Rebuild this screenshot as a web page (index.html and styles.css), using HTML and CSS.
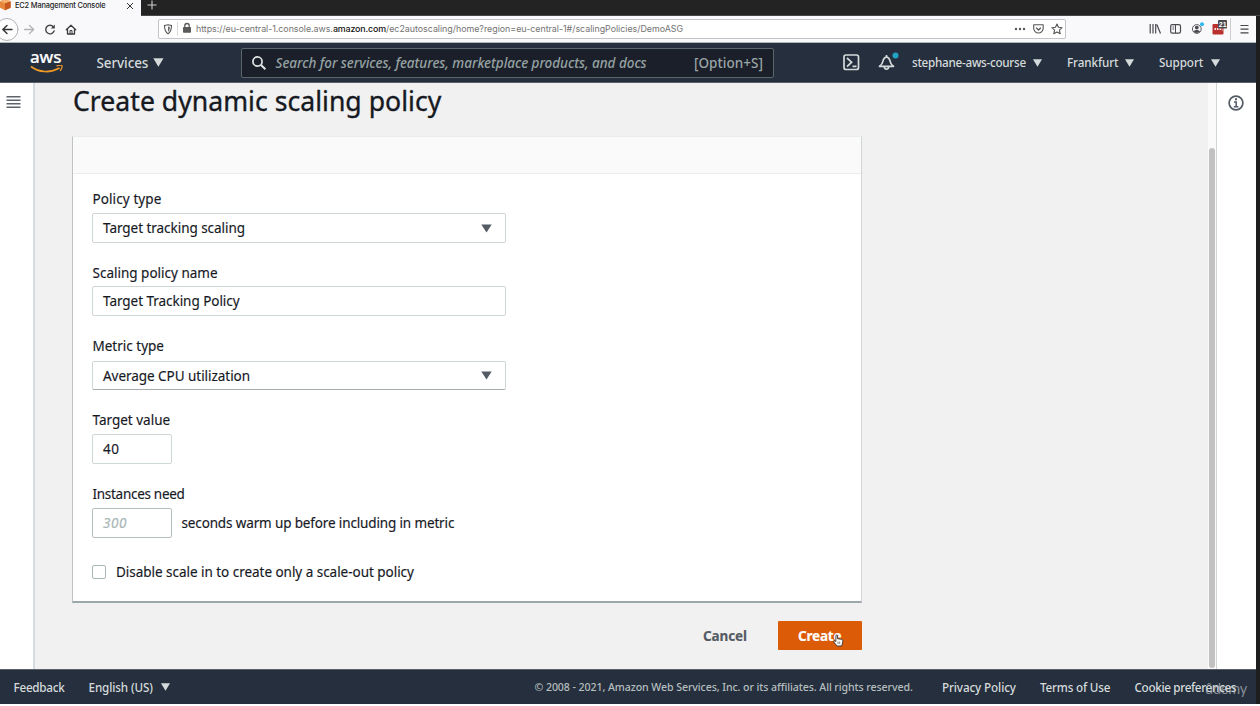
FILE: index.html
```html
<!DOCTYPE html>
<html lang="en">
<head>
<meta charset="utf-8">
<title>EC2 Management Console</title>
<link rel="stylesheet" href="styles.css">
</head>
<body>
<div class="screen">
<div class="window">
  <div class="tabstrip">
    <div class="tab">
      <svg class="tab-icon" width="11" height="12" viewBox="0 0 11 12"><path d="M0 2.200 5 0l5.600 2.200v6.600L5 11.200 0 8.800z" fill="#e8873c"/><path d="M5 4.200l5.600-2v6.600L5 11.200z" fill="#c9581e"/><path d="M0 2.200 5 0l5.600 2.200L5 4.200z" fill="#f5b06e"/></svg>
      <span class="tab-title">EC2 Management Console</span>
      <svg class="tab-close" width="8" height="8" viewBox="0 0 8 8"><path d="M1 1l6 6M7 1l-6 6" stroke="#333" stroke-width="1"/></svg>
    </div>
    <svg class="tab-new" width="10" height="10" viewBox="0 0 10 10"><path d="M5 .5v9M.5 5h9" stroke="#d0d0d0" stroke-width="1.100"/></svg>
  </div>

  <div class="toolbar">
    <svg class="nav-buttons" width="80" height="25" viewBox="0 0 80 25" fill="none" stroke-linecap="round" stroke-linejoin="round">
      <circle cx="7" cy="12.500" r="11" fill="#fdfdfe" stroke="#b4b4b8"/>
      <path d="M12 12.500H2.800M7 8.500l-4.200 4 4.200 4" stroke="#333" stroke-width="1.400"/>
      <path d="M24.500 12.500h9M29.500 8.500l4.200 4-4.200 4" stroke="#b3b3b6" stroke-width="1.300"/>
      <path d="M53.300 9.700a4.300 4.300 0 1 0 .8 4.300" stroke="#444" stroke-width="1.400"/>
      <path d="M54.800 7.500v4h-4z" fill="#444"/>
      <path d="M66.300 12.800 71 8.200l4.700 4.600M67.500 12.500V17h7v-4.500" stroke="#3c3c3c" stroke-width="1.300"/><path d="M70 17v-3.500h2V17" stroke="#3c3c3c"/>
    </svg>
    <div class="urlbar">
      <svg width="23" height="18" viewBox="0 0 23 18" fill="none">
        <path d="M5.500 5.500 9 4.700l3.500.8c0 4-.5 6.500-3.500 8.300-3-1.800-3.500-4.300-3.500-8.300z" stroke="#555" stroke-width="1.100"/><path d="M9 6.500v5.300c1.300-1 1.800-2.600 1.900-4.900z" fill="#666"/>
        <path d="M18.500 2v14" stroke="#dcdcdc"/>
      </svg>
      <svg class="lock" width="10" height="12" viewBox="0 0 10 12"><rect x="1" y="5" width="8" height="5.700" rx=".8" fill="#5a5a5a"/><path d="M2.800 5.500V3.700a2.200 2.200 0 0 1 4.400 0v1.800" fill="none" stroke="#5a5a5a" stroke-width="1.300"/></svg>
      <span class="url"><span>https://eu-central-1.console.aws.</span><b>amazon.com</b><span class="path">/ec2autoscaling/home?region=eu-central-1#/scalingPolicies/DemoASG</span></span>
      <svg class="url-actions" width="52" height="14" viewBox="0 0 52 14" fill="none" stroke="#555" stroke-width="1.100" stroke-linejoin="round">
        <g fill="#555" stroke="none"><circle cx="3" cy="7" r="1.200"/><circle cx="7" cy="7" r="1.200"/><circle cx="11" cy="7" r="1.200"/></g>
        <path d="M20.700 2.800h9.500v3.500a4.750 4.750 0 0 1-9.500 0z"/><path d="M23.200 5.800l2.300 2.200 2.300-2.200" stroke-width="1.300"/>
        <path d="M44 2l1.500 3.300 3.600.4-2.700 2.400.8 3.600L44 9.900l-3.200 1.800.8-3.600-2.700-2.400 3.600-.4z"/>
      </svg>
    </div>
    <svg class="tools" width="108" height="26" viewBox="0 0 108 26" fill="none" stroke="#4a4a4f" stroke-width="1.200">
      <path d="M2.200 8v9.500M5 8v9.500M7.700 8v9.500M8.800 8.500l3.700 9"/>
      <rect x="22.700" y="8.700" width="9.800" height="8.500" rx="1.600"/><path d="M27.500 9v8M24.500 11h1.700M24.500 13h1.700" stroke-width="1"/>
      <circle cx="48.800" cy="13" r="4.400" stroke-width=".9"/><circle cx="48.800" cy="11.600" r="1.900" fill="#4a4a4f" stroke="none"/><path d="M45.600 15.600c1-2 5.400-2 6.400 0-1.500 1.900-4.900 1.900-6.400 0z" fill="#4a4a4f" stroke="none"/>
      <circle cx="54" cy="8.200" r="2" fill="#2cb9ea" stroke="none"/>
      <rect x="64.500" y="8" width="11" height="10.500" rx="1.200" fill="#b9302f" stroke="none"/>
      <g fill="#fff" stroke="none"><circle cx="67.200" cy="13" r=".9"/><circle cx="69.700" cy="13" r=".9"/><circle cx="72.200" cy="13" r=".9"/><path d="M73.800 11.300h.6v3.400h-.6z"/></g>
      <rect x="70" y="4" width="9" height="8.500" rx="1" fill="#4b4b4f" stroke="none"/>
      <text x="70.800" y="10.700" class="badge">21</text>
      <path d="M82.500 2v22" stroke="#cdcdd0" stroke-width="1"/>
      <path d="M92.500 9.500h8M92.500 13.200h8M92.500 16.900h8" stroke="#444"/>
    </svg>
  </div>

  <header class="aws-bar">
    <div class="logo">
      <span class="logo-text">aws</span>
      <svg width="34" height="9" viewBox="0 0 34 9" fill="none"><path d="M1 1.500C9 7.600 20 8.200 29.500 3" stroke="#f29a24" stroke-width="1.700"/><path d="M26.500.9C29 .2 31.500 0 32 .7c.4.900-.4 3.500-2 5" stroke="#f29a24" stroke-width="1.200"/></svg>
    </div>
    <div class="services">Services<svg width="11" height="9" viewBox="0 0 11 9"><path d="M.3.300h10.200L5.400 8.700z" fill="#d5dbdb"/></svg></div>
    <div class="search">
      <svg width="16" height="16" viewBox="0 0 16 16" fill="none" stroke="#dfe3e3"><circle cx="6.500" cy="6.500" r="4.600" stroke-width="1.700"/><path d="M10 10l4.400 4.300" stroke-width="2"/></svg>
      <span class="search-hint">Search for services, features, marketplace products, and docs</span>
      <span class="shortcut">[Option+S]</span>
    </div>
    <svg class="shell" width="17" height="17" viewBox="0 0 17 17" fill="none" stroke="#d5dbdb" stroke-width="1.700"><rect x="1" y="1" width="14.500" height="14.500" rx="2"/><path d="M4 4l4.600 4.200L4 12.600M9.500 12.400h4"/></svg>
    <svg class="bell" width="22" height="20" viewBox="0 0 22 20" fill="none" stroke="#d5dbdb" stroke-width="1.700" stroke-linejoin="round"><path d="M1.500 14.300c2.800-1.700 3.200-3.500 3.600-5.700.4-2 1.500-3.100 3.400-3.600 1.900.5 3 1.600 3.400 3.600.4 2.200.8 4 3.600 5.700z"/><path d="M8.500 5V3M6.300 14.800c.4 3 4 3 4.400 0"/><circle cx="17.500" cy="3.500" r="3" fill="#22a3c6" stroke="none"/></svg>
    <div class="menu account">stephane-aws-course<svg width="9" height="8" viewBox="0 0 9 8"><path d="M0 .3h9L4.500 7.700z" fill="#d5dbdb"/></svg></div>
    <div class="menu region">Frankfurt<svg width="9" height="8" viewBox="0 0 9 8"><path d="M0 .3h9L4.500 7.700z" fill="#d5dbdb"/></svg></div>
    <div class="menu support">Support<svg width="9" height="8" viewBox="0 0 9 8"><path d="M0 .3h9L4.500 7.700z" fill="#d5dbdb"/></svg></div>
  </header>

  <div class="page">
    <nav class="side">
      <svg width="15" height="14" viewBox="0 0 15 14" fill="#5d646c"><path d="M.5 1h14v1.500H.5zM.5 4.500h14V6H.5zM.5 8h14v1.500H.5zM.5 11.500h14V13H.5z"/></svg>
    </nav>
    <main class="content">
      <h1>Create dynamic scaling policy</h1>
      <section class="card">
        <div class="card-head"></div>
        <div class="card-body">
          <div class="field"><label class="t-type">Policy type</label><div class="control"><span>Target tracking scaling</span><svg width="11" height="9" viewBox="0 0 11 9"><path d="M.3.500h10.400L5.500 8.500z" fill="#545b64"/></svg></div></div>
          <div class="field"><label>Scaling policy name</label><div class="control"><span>Target Tracking Policy</span></div></div>
          <div class="field"><label>Metric type</label><div class="control metric"><span>Average CPU utilization</span><svg width="11" height="9" viewBox="0 0 11 9"><path d="M.3.500h10.400L5.500 8.500z" fill="#545b64"/></svg></div></div>
          <div class="field"><label>Target value</label><div class="control small"><span class="number">40</span></div></div>
          <div class="field"><label class="t-need">Instances need</label><div class="inline"><div class="control small warmup"><span>300</span></div><span class="t-seconds">seconds warm up before including in metric</span></div></div>
          <div class="check"><span class="box"></span><span>Disable scale in to create only a scale-out policy</span></div>
        </div>
      </section>
      <div class="actions">
        <span class="cancel">Cancel</span>
        <div class="create">Create
          <svg class="cursor" width="11" height="13" viewBox="0 0 11 13"><path d="M3 1.200c.9-.5 1.500 0 1.500.8v2.700l3.800.6c1.300.3 1.700 1 1.500 2.200l-.6 2.800-.7 1.700H4L1 8.200c-.6-.9.300-1.700 1.200-1.100l.6.500z" fill="#fff" stroke="#333" stroke-width=".9"/><path d="M5 7.500v2.500M6.700 7.500v2.500" stroke="#333" stroke-width=".6"/></svg>
        </div>
      </div>
    </main>
    <div class="scroll"><div class="thumb"></div></div>
    <aside class="info">
      <svg width="18" height="18" viewBox="0 0 18 18" fill="none" stroke="#545b64"><circle cx="9" cy="9" r="6.900" stroke-width="1.700"/><path d="M9 4.300v2" stroke-width="2"/><path d="M7 8h2.200v4.500M6.800 12.700h4.600" stroke-width="1.500"/></svg>
    </aside>
  </div>

  <footer class="footer">
    <span class="feedback">Feedback</span>
    <span class="language">English (US)<svg width="9" height="8" viewBox="0 0 9 8"><path d="M0 .3h9L4.500 7.700z" fill="#d5dbdb"/></svg></span>
    <span class="copyright">© 2008 - 2021, Amazon Web Services, Inc. or its affiliates. All rights reserved.</span>
    <span class="privacy">Privacy Policy</span>
    <span class="terms">Terms of Use</span>
    <span class="cookies">Cookie preferences</span>
  </footer>
</div>
<div class="watermark">ûdemy</div>
</div>
</body>
</html>
```
FILE: styles.css
```css
* { box-sizing: border-box; }
body { margin: 0; background: #fff; font-family: "Noto Sans", "Open Sans", sans-serif; font-size: 13.5px; color: #16191f; overflow: hidden; }
svg { display: block; flex: none; }
.screen { position: relative; width: 1260px; height: 704px; background: #1e1e1e; }
.window { width: 1256px; height: 704px; display: flex; flex-direction: column; white-space: nowrap; }

/* browser chrome */
.tabstrip { height: 16px; flex: none; display: flex; background: #232323; width: 1260px; border-bottom: 1px solid #4a4747; }
.tab { width: 141px; height: 16px; background: #f9f9fb; display: flex; align-items: center; position: relative; padding-bottom: 5px; }
.tab-icon { margin-top: -1px; }
.tab-title { font: 500 7.400px/11px Inter, sans-serif; margin-left: 4px; width: 92px; color: #222; letter-spacing: -.15px; }
.tab-close { margin-left: 19px; }
.tab-new { margin: 0 0 0 6px; }
.toolbar { height: 27px; flex: none; background: #f9f9fb; display: flex; align-items: center; border-bottom: 1px solid #aeb6b8; }
.nav-buttons { margin-right: 78px; }
.urlbar { flex: none; width: 908px; height: 20px; border: 1px solid #c4c4c8; border-radius: 2px; background: #fff; display: flex; align-items: center; overflow: hidden; }
.lock { margin-top: -2px; }
.url { flex: none; font: 8.900px/12px Inter, sans-serif; letter-spacing: -.04px; color: #737373; margin-left: 4px; width: 817px; display: block; }
.url b { font-weight: 500; color: #111; letter-spacing: -.14px; }
.url .path { letter-spacing: -.02px; }
.tools { margin-left: 82px; }
.badge { font: bold 7px "Liberation Sans", sans-serif; fill: #fff; stroke: none; }

/* console header */
.aws-bar { height: 40px; flex: none; background: #252f3e; border-bottom: 1px solid #596068; display: flex; align-items: center; color: #d5dbdb; font-weight: 500; }
.logo { width: 66px; padding-left: 30px; height: 40px; color: #fff; }
.logo-text { display: block; font: 500 17px/20px "Noto Sans", sans-serif; margin-top: 4px; letter-spacing: -.1px; padding-left: 0; -webkit-text-stroke: .2px; }
.logo svg { margin-top: -2px; }
.services { margin-left: 30.500px; width: 144.500px; display: flex; align-items: center; gap: 5px; letter-spacing: -.1px; }
.search { width: 533px; height: 30px; background: #1b1f29; border: 1px solid #5b666b; border-radius: 2px; display: flex; align-items: center; padding: 0 10px 0 9px; }
.search-hint { margin-left: 8.500px; font-size: 13.500px; font-style: italic; color: #95a2a3; letter-spacing: -.03px; }
.shortcut { margin-left: auto; color: #9aa6a8; letter-spacing: .05px; }
.shell { margin-left: 69px; }
.bell { margin-left: 18px; margin-top: -2px; }
.menu { font-size: 11.700px; display: flex; align-items: center; margin-top: -1px; }
.menu svg { margin-left: auto; margin-top: 1px; }
.account { width: 130px; margin-left: 12px; letter-spacing: -.27px; }
.region { width: 67px; margin-left: 25px; letter-spacing: -.1px; }
.support { width: 61px; margin-left: 25px; letter-spacing: -.1px; }

/* console page */
.page { flex: 1; display: flex; min-height: 0; background: #f1f1f1; }
.side { width: 35px; background: #fff; border-right: 2px solid #d5dbe0; padding: 12px 0 0 6px; }
.content { flex: 1; padding: 0 0 0 38px; -webkit-text-stroke: .15px; }
h1 { margin: 0 0 17px; font-size: 26.600px; line-height: 36px; font-weight: 400; letter-spacing: .02px; -webkit-text-stroke: .35px; }
.card { width: 790px; height: 467px; background: #fff; border: 1px solid #d0d5d6; border-top-color: #eaeded; border-left-color: #bfc3c4; border-bottom: 2px solid #9ba8a9; margin-left: -1px; }
.card-head { height: 37px; background: #fafafa; border-bottom: 1px solid #ececec; }
.card-body { padding: 15px 0 0 19px; }
.field { height: 73.700px; }
.field label { display: block; line-height: 20px; margin-bottom: 4px; padding-left: .5px; }
.t-type { letter-spacing: .1px; }
.field .t-need { letter-spacing: -.29px; }
.control { width: 414px; height: 30px; border: 1px solid #cfd6d7; border-radius: 2px; display: flex; align-items: center; justify-content: space-between; padding: 0 13px 0 10px; letter-spacing: -.04px; }
.metric { height: 29px; border-bottom-color: #a5acad; margin-top: 5px; }
.field:nth-child(2) label { margin-bottom: 3.300px; }
.small { width: 80px; }
.number { letter-spacing: .5px; }
.warmup { border-color: #b5bfc0; font-style: italic; color: #aab7b8; }
.warmup span { letter-spacing: .5px; -webkit-text-stroke: .2px; }
.inline { display: flex; align-items: center; gap: 9.500px; }
.t-seconds { letter-spacing: -.14px; }
.check { display: flex; align-items: center; gap: 10px; height: 20px; margin-top: 4.500px; letter-spacing: -.03px; }
.box { width: 14px; height: 14px; border: 1px solid #aab7b8; border-radius: 2px; }
.actions { width: 789px; display: flex; justify-content: flex-end; align-items: center; margin-top: 18px; font-weight: 700; }
.cancel { color: #545b64; margin-right: 31px; letter-spacing: -.1px; }
.create { position: relative; width: 84px; height: 29px; background: #dc5b07; color: #fff; border-radius: 1px; line-height: 30px; padding-left: 20px; letter-spacing: -.2px; }
.cursor { position: absolute; left: 55px; top: 13px; }
.scroll { width: 8px; background: #fafafa; padding: 65px 1px 0; }
.thumb { height: 520px; border-radius: 3px; background: #c1c1c1; }
.info { width: 40px; background: #fff; border-left: 1px solid #cfd4d6; padding: 11px 0 0 10px; }

/* footer */
.footer { height: 35px; flex: none; background: #252f3e; border-top: 1px solid #596068; display: flex; align-items: center; color: #d5dbdb; font-size: 11.700px; font-weight: 500; }
.feedback { margin-left: 13.500px; width: 75px; letter-spacing: -.25px; }
.language { width: 446px; display: flex; align-items: center; gap: 8px; letter-spacing: -.12px; }
.copyright { width: 407.500px; font-size: 10.600px; color: #b5bebe; letter-spacing: -.08px; }
.privacy { width: 98px; letter-spacing: -.12px; }
.terms { width: 94.500px; letter-spacing: -.2px; }
.cookies { letter-spacing: -.33px; }
.watermark { position: absolute; left: 1205px; top: 679px; font: 14.500px/20px Lato, sans-serif; color: rgba(205, 208, 212, .6); letter-spacing: -.2px; }
```
